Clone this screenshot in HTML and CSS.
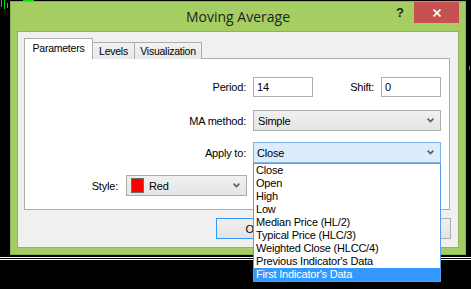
FILE: index.html
```html
<!DOCTYPE html>
<html>
<head>
<meta charset="utf-8">
<link rel="stylesheet" href="styles.css">
</head>
<body>
<div class="desk">
  <i class="tick" style="left:1px;top:0;height:7px"></i>
  <i class="tick" style="left:4px;top:0;height:9px"></i>
  <i class="tick" style="left:7px;top:3px;height:5px"></i>
  <i class="tick wide" style="left:23px;top:0;width:11px;height:1px"></i>
  <i class="tick" style="left:469px;top:66px;height:4px"></i>
  <div class="rule" style="top:257px"></div>
  <div class="rule" style="top:259px"></div>

  <div class="window">
    <div class="titlebar">
      <span></span>
      <div class="title">Moving Average</div>
      <div class="caption">
        <span class="help">?</span>
        <span class="close"><svg width="8" height="8" viewBox="0 0 8 8"><path d="M0.5 0.5 L7.5 7.5 M7.5 0.5 L0.5 7.5" stroke="#fff" stroke-width="1.7" fill="none"/></svg></span>
      </div>
    </div>
    <div class="client">
      <div class="tabs">
        <div class="tab active w-par">Parameters</div>
        <div class="tab w-lev">Levels</div>
        <div class="tab w-vis">Visualization</div>
      </div>
      <div class="panel">
        <div class="row row-period">
          <span class="lbl w-main">Period:</span>
          <div class="field ml7">14</div>
          <span class="lbl w-shift">Shift:</span>
          <div class="field ml7">0</div>
        </div>
        <div class="row row-method">
          <span class="lbl w-main">MA method:</span>
          <div class="select ml7 w-wide"><span class="val">Simple</span><svg class="chev" width="7" height="5" viewBox="0 0 7 5"><path d="M0.6 0.6 L3.5 3.6 L6.4 0.6" stroke="#5c5c5c" stroke-width="1.6" fill="none"/></svg></div>
        </div>
        <div class="row row-apply">
          <span class="lbl w-main">Apply to:</span>
          <div class="combo ml7 w-wide">
            <div class="select focus"><span class="val">Close</span><svg class="chev" width="7" height="5" viewBox="0 0 7 5"><path d="M0.6 0.6 L3.5 3.6 L6.4 0.6" stroke="#5c5c5c" stroke-width="1.6" fill="none"/></svg></div>
            <ul class="dropdown">
              <li>Close</li>
              <li>Open</li>
              <li>High</li>
              <li>Low</li>
              <li>Median Price (HL/2)</li>
              <li>Typical Price (HLC/3)</li>
              <li>Weighted Close (HLCC/4)</li>
              <li>Previous Indicator's Data</li>
              <li class="sel">First Indicator's Data</li>
            </ul>
          </div>
        </div>
        <div class="row row-style">
          <span class="lbl w-style">Style:</span>
          <div class="select ml8 w-style-sel"><span class="swatch"></span><span class="val">Red</span><svg class="chev" width="7" height="5" viewBox="0 0 7 5"><path d="M0.6 0.6 L3.5 3.6 L6.4 0.6" stroke="#5c5c5c" stroke-width="1.6" fill="none"/></svg></div>
        </div>
      </div>
      <div class="buttons">
        <button class="btn default">OK</button>
        <button class="btn" aria-label="Cancel"></button>
        <button class="btn" aria-label="Reset"></button>
      </div>
    </div>
  </div>
</div>
</body>
</html>
```
FILE: styles.css
```css
html, body {
  margin: 0;
  padding: 0;
}
body {
  background: #000;
  width: 471px;
  height: 289px;
  overflow: hidden;
  font-family: "Liberation Sans", Arial, sans-serif;
}
.desk {
  position: relative;
  width: 471px;
  height: 289px;
}
.tick {
  position: absolute;
  width: 1px;
  background: #00e000;
}
.rule {
  position: absolute;
  left: 0;
  width: 471px;
  height: 1px;
  background: #fff;
}
.window {
  position: absolute;
  left: 10px;
  top: 1px;
  width: 456px;
  height: 254px;
  box-sizing: border-box;
  border: 1px solid #8ab359;
  background: #a5ce62;
  display: flex;
  flex-direction: column;
}
.titlebar {
  height: 29px;
  flex: none;
  display: grid;
  grid-template-columns: 1fr auto 1fr;
}
.title {
  font-family: "Open Sans", "Noto Sans", sans-serif;
  font-size: 14px;
  line-height: 29px;
  color: #222;
}
.caption {
  justify-self: end;
  display: flex;
  align-items: flex-start;
  margin-right: 6px;
}
.help {
  width: 28px;
  height: 21px;
  line-height: 21px;
  text-align: center;
  font-family: "Liberation Sans", Arial, sans-serif;
  font-weight: bold;
  font-size: 13px;
  color: #222;
}
.close {
  width: 45px;
  height: 21px;
  background: #c75050;
  display: flex;
  align-items: center;
  justify-content: center;
}
.client {
  flex: 1;
  margin: 0 6px 6px;
  border: 1px solid #8fb35c;
  background: #f0f0f0;
  padding: 6px 0 0 6px;
}
.tabs {
  display: flex;
  align-items: flex-end;
  height: 21px;
  margin-bottom: -1px;
  position: relative;
  z-index: 1;
}
.tab {
  box-sizing: border-box;
  height: 17px;
  border: 1px solid #adadad;
  border-bottom: none;
  background: linear-gradient(#f2f2f2, #e7e7e7);
  font-size: 10.5px;
  letter-spacing: -0.25px;
  color: #000;
  display: flex;
  align-items: center;
  justify-content: center;
  margin-left: -1px;
}
.tab.active {
  height: 21px;
  background: #fff;
  margin-left: 0;
  position: relative;
  z-index: 2;
  padding-bottom: 2px;
}
.w-par { width: 69px; }
.w-lev { width: 43px; }
.w-vis { width: 68px; }
.panel {
  width: 426px;
  height: 152px;
  box-sizing: border-box;
  border: 1px solid #adadad;
  background: #fff;
  padding-top: 18px;
}
.row {
  display: flex;
  align-items: center;
}
.row-period { height: 20px; }
.row-method { height: 21px; margin-top: 13px; }
.row-apply { height: 21px; margin-top: 11px; }
.row-style { height: 21px; margin-top: 12px; }
.lbl {
  font-size: 11px;
  letter-spacing: -0.2px;
  text-align: right;
  color: #000;
  flex: none;
}
.w-main { width: 221px; }
.w-shift { width: 61px; }
.w-style { width: 93px; }
.ml7 { margin-left: 7px; }
.ml8 { margin-left: 8px; }
.field {
  box-sizing: border-box;
  width: 60px;
  height: 20px;
  border: 1px solid #abadb3;
  background: #fff;
  padding-left: 3px;
  font-size: 11px;
  line-height: 18px;
}
.select {
  box-sizing: border-box;
  height: 21px;
  border: 1px solid #acacac;
  background: linear-gradient(#f0f0f0, #e5e5e5);
  display: flex;
  align-items: center;
  padding: 0 6px 0 4px;
  font-size: 11px;
  letter-spacing: -0.2px;
}
.select .val { flex: 1; }
.chev { flex: none; }
.select.focus {
  background: #dcecfc;
  border-color: #7eb4ea;
  padding-left: 3px;
}
.w-wide { width: 188px; }
.w-style-sel { width: 121px; }
.combo {
  position: relative;
  height: 21px;
}
.combo .select { width: 100%; }
.swatch {
  flex: none;
  box-sizing: border-box;
  width: 13px;
  height: 15px;
  border: 1px solid #6d6d6d;
  background: #ff0000;
  margin-right: 5px;
}
.dropdown {
  position: absolute;
  top: 100%;
  left: 0;
  width: 188px;
  box-sizing: border-box;
  margin: 0;
  padding: 0;
  list-style: none;
  border: 1px solid #569de5;
  background: #fff;
  z-index: 5;
}
.dropdown li {
  height: 13px;
  line-height: 13px;
  padding-left: 2px;
  font-size: 11px;
  letter-spacing: -0.2px;
  color: #000;
  white-space: nowrap;
}
.dropdown li.sel {
  background: #3399ff;
  color: #fff;
}
.buttons {
  display: flex;
  justify-content: flex-end;
  gap: 5px;
  margin-top: 8px;
  margin-right: 7px;
}
.btn {
  box-sizing: border-box;
  width: 75px;
  height: 21px;
  border: 1px solid #adadad;
  background: linear-gradient(#f0f0f0, #e3e3e3);
  font-family: "Liberation Sans", Arial, sans-serif;
  font-size: 11px;
  color: #000;
  padding: 0;
  margin: 0;
}
.btn.default {
  border-color: #3399ff;
}
```
